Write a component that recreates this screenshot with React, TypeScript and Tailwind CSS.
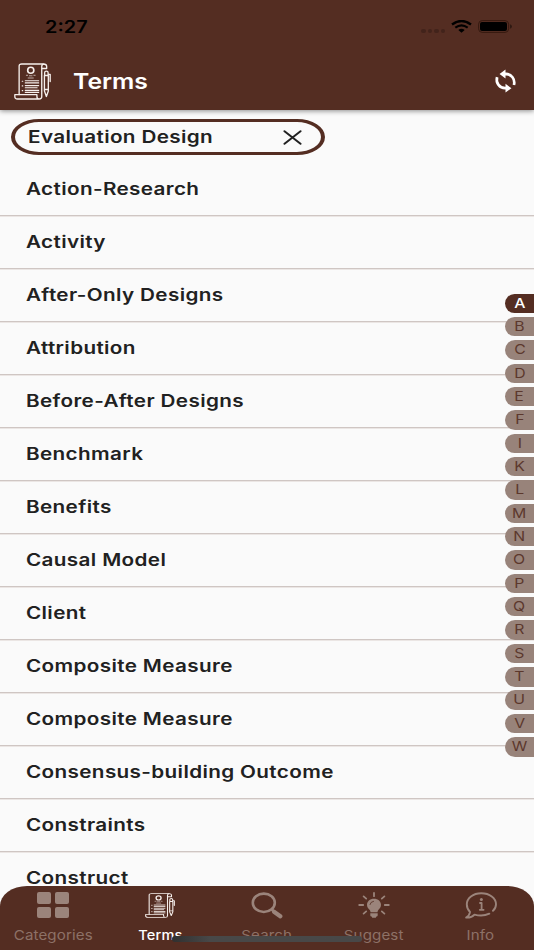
import type { ReactNode } from 'react';

const terms = [
  'Action-Research',
  'Activity',
  'After-Only Designs',
  'Attribution',
  'Before-After Designs',
  'Benchmark',
  'Benefits',
  'Causal Model',
  'Client',
  'Composite Measure',
  'Composite Measure',
  'Consensus-building Outcome',
  'Constraints',
  'Construct',
];

const letters = 'ABCDEFIKLMNOPQRSTUVW'.split('');

function TermsIcon({ className }: { className: string }) {
  return (
    <svg
      className={className}
      viewBox="0 0 36 37"
      preserveAspectRatio="none"
      fill="none"
      stroke="#f6efec"
      strokeWidth="1.3"
      strokeLinecap="round"
      strokeLinejoin="round"
    >
      {/* scroll */}
      <path d="M5 31.5V3Q5 1 7.5 1H28.5Q31.8 1 31.8 3.4V5.5H27.5" />
      <path d="M27 31V3.4Q27 1.2 29 1.2M27 9V33.5Q27 36 24.5 36H3.5Q.8 36 .8 33.5V31.7H22.3V33.5Q22.3 36 24.5 36" />
      {/* seal and title */}
      <circle cx="16.3" cy="7.3" r="3" strokeWidth="1.6" />
      <path d="M12 12.3h1.3M15 12.8h2.6M19.3 12.3h1.3M13.8 15h5" strokeWidth=".8" opacity=".8" />
      {/* text lines */}
      <path
        d="M11 17.8H24M11 19.9H24M11 22.6H24M11 24.7H22.5M11 27.4H24M11 29.4H24M8 18.2h.5M8 22.9h.5M8 27.6h.5"
        strokeWidth="1.1"
      />
      {/* pen */}
      <path d="M29.6 12.5V28L31.5 33.5L33.4 28V12.5ZM29.6 26.5H33.4M29.8 12V9.8Q29.8 8.2 31.5 8.2T33.2 9.8V12M33.4 11.3H35.2V18.5" />
    </svg>
  );
}

function SearchIcon() {
  return (
    <svg className="h-[27px] w-8" viewBox="0 0 32 27" preserveAspectRatio="none" fill="none" stroke="#9b847b" strokeLinecap="round">
      <ellipse cx="12.8" cy="10.8" rx="11" ry="9.2" strokeWidth="2.6" />
      <path d="M20.8 17.5L22.5 19" strokeWidth="2.6" />
      <path d="M23 19.7L29.3 24.3" strokeWidth="4.2" />
    </svg>
  );
}

function BulbIcon() {
  return (
    <svg className="h-[26px] w-8" viewBox="0 0 32 26" preserveAspectRatio="none" fill="none" stroke="#9b847b" strokeWidth="1.8" strokeLinecap="round">
      <path d="M16 1v3.2M1.2 13h4M26.8 13h4M5.6 4.4l2.6 2.2M26.4 4.4l-2.6 2.2M5.6 21.6l2.6-2.2M26.4 21.6l-2.6-2.2" />
      <path
        d="M16 6.8c-4.2 0-7 2.7-7 6 0 2.5 1.3 3.7 2.5 4.9.7.8 1 1.5 1 2.6h7c0-1.1.3-1.8 1-2.6 1.2-1.2 2.5-2.4 2.5-4.9 0-3.3-2.8-6-7-6ZM12.3 21.3h7.4v1.9c0 .8-.7 1.3-1.4 1.3l-.5 1.3h-3.6l-.5-1.3c-.8 0-1.4-.5-1.4-1.3Z"
        fill="#9b847b"
        stroke="none"
      />
      <path d="M12 12.5Q12.3 9.8 15.5 9.3" stroke="#542d22" strokeWidth=".8" />
    </svg>
  );
}

function InfoIcon() {
  return (
    <svg className="h-[27px] w-8" viewBox="0 0 32 27" preserveAspectRatio="none" fill="none" stroke="#9b847b" strokeWidth="1.9" strokeLinecap="round" strokeLinejoin="round">
      <path d="M28 18.8C30 17 31 14.8 31 12.3C31 6 24.6 1.2 16.3 1.2S1.8 6 1.8 12.3C1.8 15.3 3 18 5 20C4.8 22 3.5 24 1.2 25.6C4.6 25.8 7.5 24.8 9.5 22.6C14.5 24 20.3 23.6 24.3 21.7" />
      <path d="M15 11h1.6v6.6M14.8 17.8h3.8" strokeWidth="1.8" />
      <circle cx="16.4" cy="7.6" r="1.5" fill="#9b847b" stroke="none" />
    </svg>
  );
}

function CategoriesIcon() {
  return (
    <div className="grid grid-cols-2 gap-x-1 gap-y-[3px]">
      {[0, 1, 2, 3].map((i) => (
        <span key={i} className="h-[11.5px] w-[14px] rounded-[2px] bg-[#9b847b]" />
      ))}
    </div>
  );
}

function Tab({ icon, label, active }: { icon: ReactNode; label: string; active?: boolean }) {
  return (
    <div className="flex flex-1 flex-col items-center">
      <div className="flex h-[38px] items-center">{icon}</div>
      <span
        className={
          active
            ? 'mt-px block scale-x-[1.08] text-[13.5px] leading-[20px] font-medium tracking-[0.1px] text-white'
            : 'mt-px block scale-x-[1.12] text-[13.5px] leading-[20px] tracking-[0.1px] text-[#8d7167]'
        }
      >
        {label}
      </span>
    </div>
  );
}

export default function App() {
  return (
    <div className="relative flex h-[950px] w-[534px] flex-col overflow-hidden bg-[#fafafa] font-['Inter',sans-serif] text-[#212121]">
      <header className="relative z-10 h-[110px] shrink-0 bg-[#542d22] shadow-[0_1px_5px_rgba(0,0,0,0.45)]">
        {/* status bar */}
        <div className="flex h-[53px] items-center pr-[22px] pl-[45px] text-black">
          <span className="mt-[2px] origin-left scale-x-[1.17] text-[17px] font-semibold">2:27</span>
          <div className="ml-auto flex items-center">
            <div className="mt-[9px] mr-[6px] flex gap-[2px]">
              {[0, 1, 2, 3].map((i) => (
                <span key={i} className="h-1 w-[4.5px] rounded-full bg-[#42231b]" />
              ))}
            </div>
            <svg className="mr-[6px] h-[13px] w-[21px]" viewBox="0 0 21 13" fill="none" stroke="black">
              <path d="M1 4.5Q10.5-2.5 20 4.5" strokeWidth="2.4" />
              <path d="M4.3 7.6Q10.5 3 16.7 7.6" strokeWidth="2.2" />
              <path d="M7.3 10Q10.5 7.6 13.7 10L10.5 12.7Z" fill="black" stroke="none" />
            </svg>
            <svg className="h-[13px] w-[34px]" viewBox="0 0 34 13">
              <rect x=".6" y=".6" width="30" height="11.8" rx="3.6" fill="none" stroke="#35190f" strokeWidth="1" />
              <rect x="2" y="1.9" width="27" height="9.2" rx="2" fill="black" />
              <path d="M32 4.3Q34 5 34 6.5T32 8.7Z" fill="#2f1912" />
            </svg>
          </div>
        </div>
        <div className="flex h-[56px] items-center pr-[17px] pl-[14px]">
          <TermsIcon className="h-[37px] w-[37px]" />
          <h1 className="ml-[22px] origin-left scale-x-[1.15] text-[21.5px] font-semibold text-white">Terms</h1>
          <svg className="ml-auto h-6 w-[23px]" viewBox="0 0 24 24" preserveAspectRatio="none" fill="none" stroke="white" strokeWidth="2.8">
            <path d="M10.5 5H12.5C18 5 22.4 10 20.8 16" />
            <path d="M13.5 19.2H11.5C6 19.2 1.6 14.2 3.2 8.2" />
            <path d="M12 .6V9.4L5.8 5ZM12 14.8V23.6L18.2 19.2Z" fill="white" stroke="none" />
          </svg>
        </div>
      </header>

      <div className="flex h-[53px] shrink-0 items-start pt-[9px] pl-[11px]">
        <div className="flex h-[36px] w-[314px] items-center justify-between rounded-[28px/18px] border-x-4 border-y-[3px] border-[#542d22] pr-[19px] pl-[13px]">
          <span className="mt-px origin-left scale-x-[1.216] text-[17px] font-semibold tracking-[0.3px] whitespace-nowrap">
            Evaluation Design
          </span>
          <svg className="h-[15px] w-[19px]" viewBox="0 0 19 15" fill="none" stroke="#212121" strokeWidth="2" strokeLinecap="round">
            <path d="M1.5 1.2L17.5 13.8M17.5 1.2L1.5 13.8" />
          </svg>
        </div>
      </div>

      <ul>
        {terms.map((term, i) => (
          <li
            key={i}
            className="flex h-[53px] items-center border-b border-[#cfc6c3] pt-[2px] pl-[26px] shadow-[0_1px_0_#ebe6e4]"
          >
            <span className="origin-left scale-x-[1.216] text-[17px] font-semibold tracking-[0.3px] whitespace-nowrap">
              {term}
            </span>
          </li>
        ))}
      </ul>

      {/* alphabet index, floats over the list */}
      <div className="absolute top-[293.5px] right-0 flex flex-col gap-[3.85px]">
        {letters.map((letter) => (
          <div
            key={letter}
            className={
              letter === 'A'
                ? 'flex h-[19.5px] w-[29px] items-center justify-center rounded-l-[12px] bg-[#542d22] font-medium text-white'
                : 'flex h-[19.5px] w-[29px] items-center justify-center rounded-l-[12px] bg-[#98837a] text-[#5c382d]'
            }
          >
            <span className="scale-x-[1.17] text-[13.5px] leading-none">{letter}</span>
          </div>
        ))}
      </div>

      <nav className="absolute inset-x-0 bottom-0 flex h-[64px] rounded-tl-[27px_20px] rounded-tr-[27px_20px] bg-[#542d22]">
        <Tab icon={<CategoriesIcon />} label="Categories" />
        <Tab icon={<TermsIcon className="h-[25px] w-[30px]" />} label="Terms" active />
        <Tab icon={<SearchIcon />} label="Search" />
        <Tab icon={<BulbIcon />} label="Suggest" />
        <Tab icon={<InfoIcon />} label="Info" />
        <div className="absolute bottom-[8px] left-[172px] h-[6px] w-[190px] rounded-full bg-linear-to-r from-[#303030] to-[#484848] to-20%" />
      </nav>
    </div>
  );
}
